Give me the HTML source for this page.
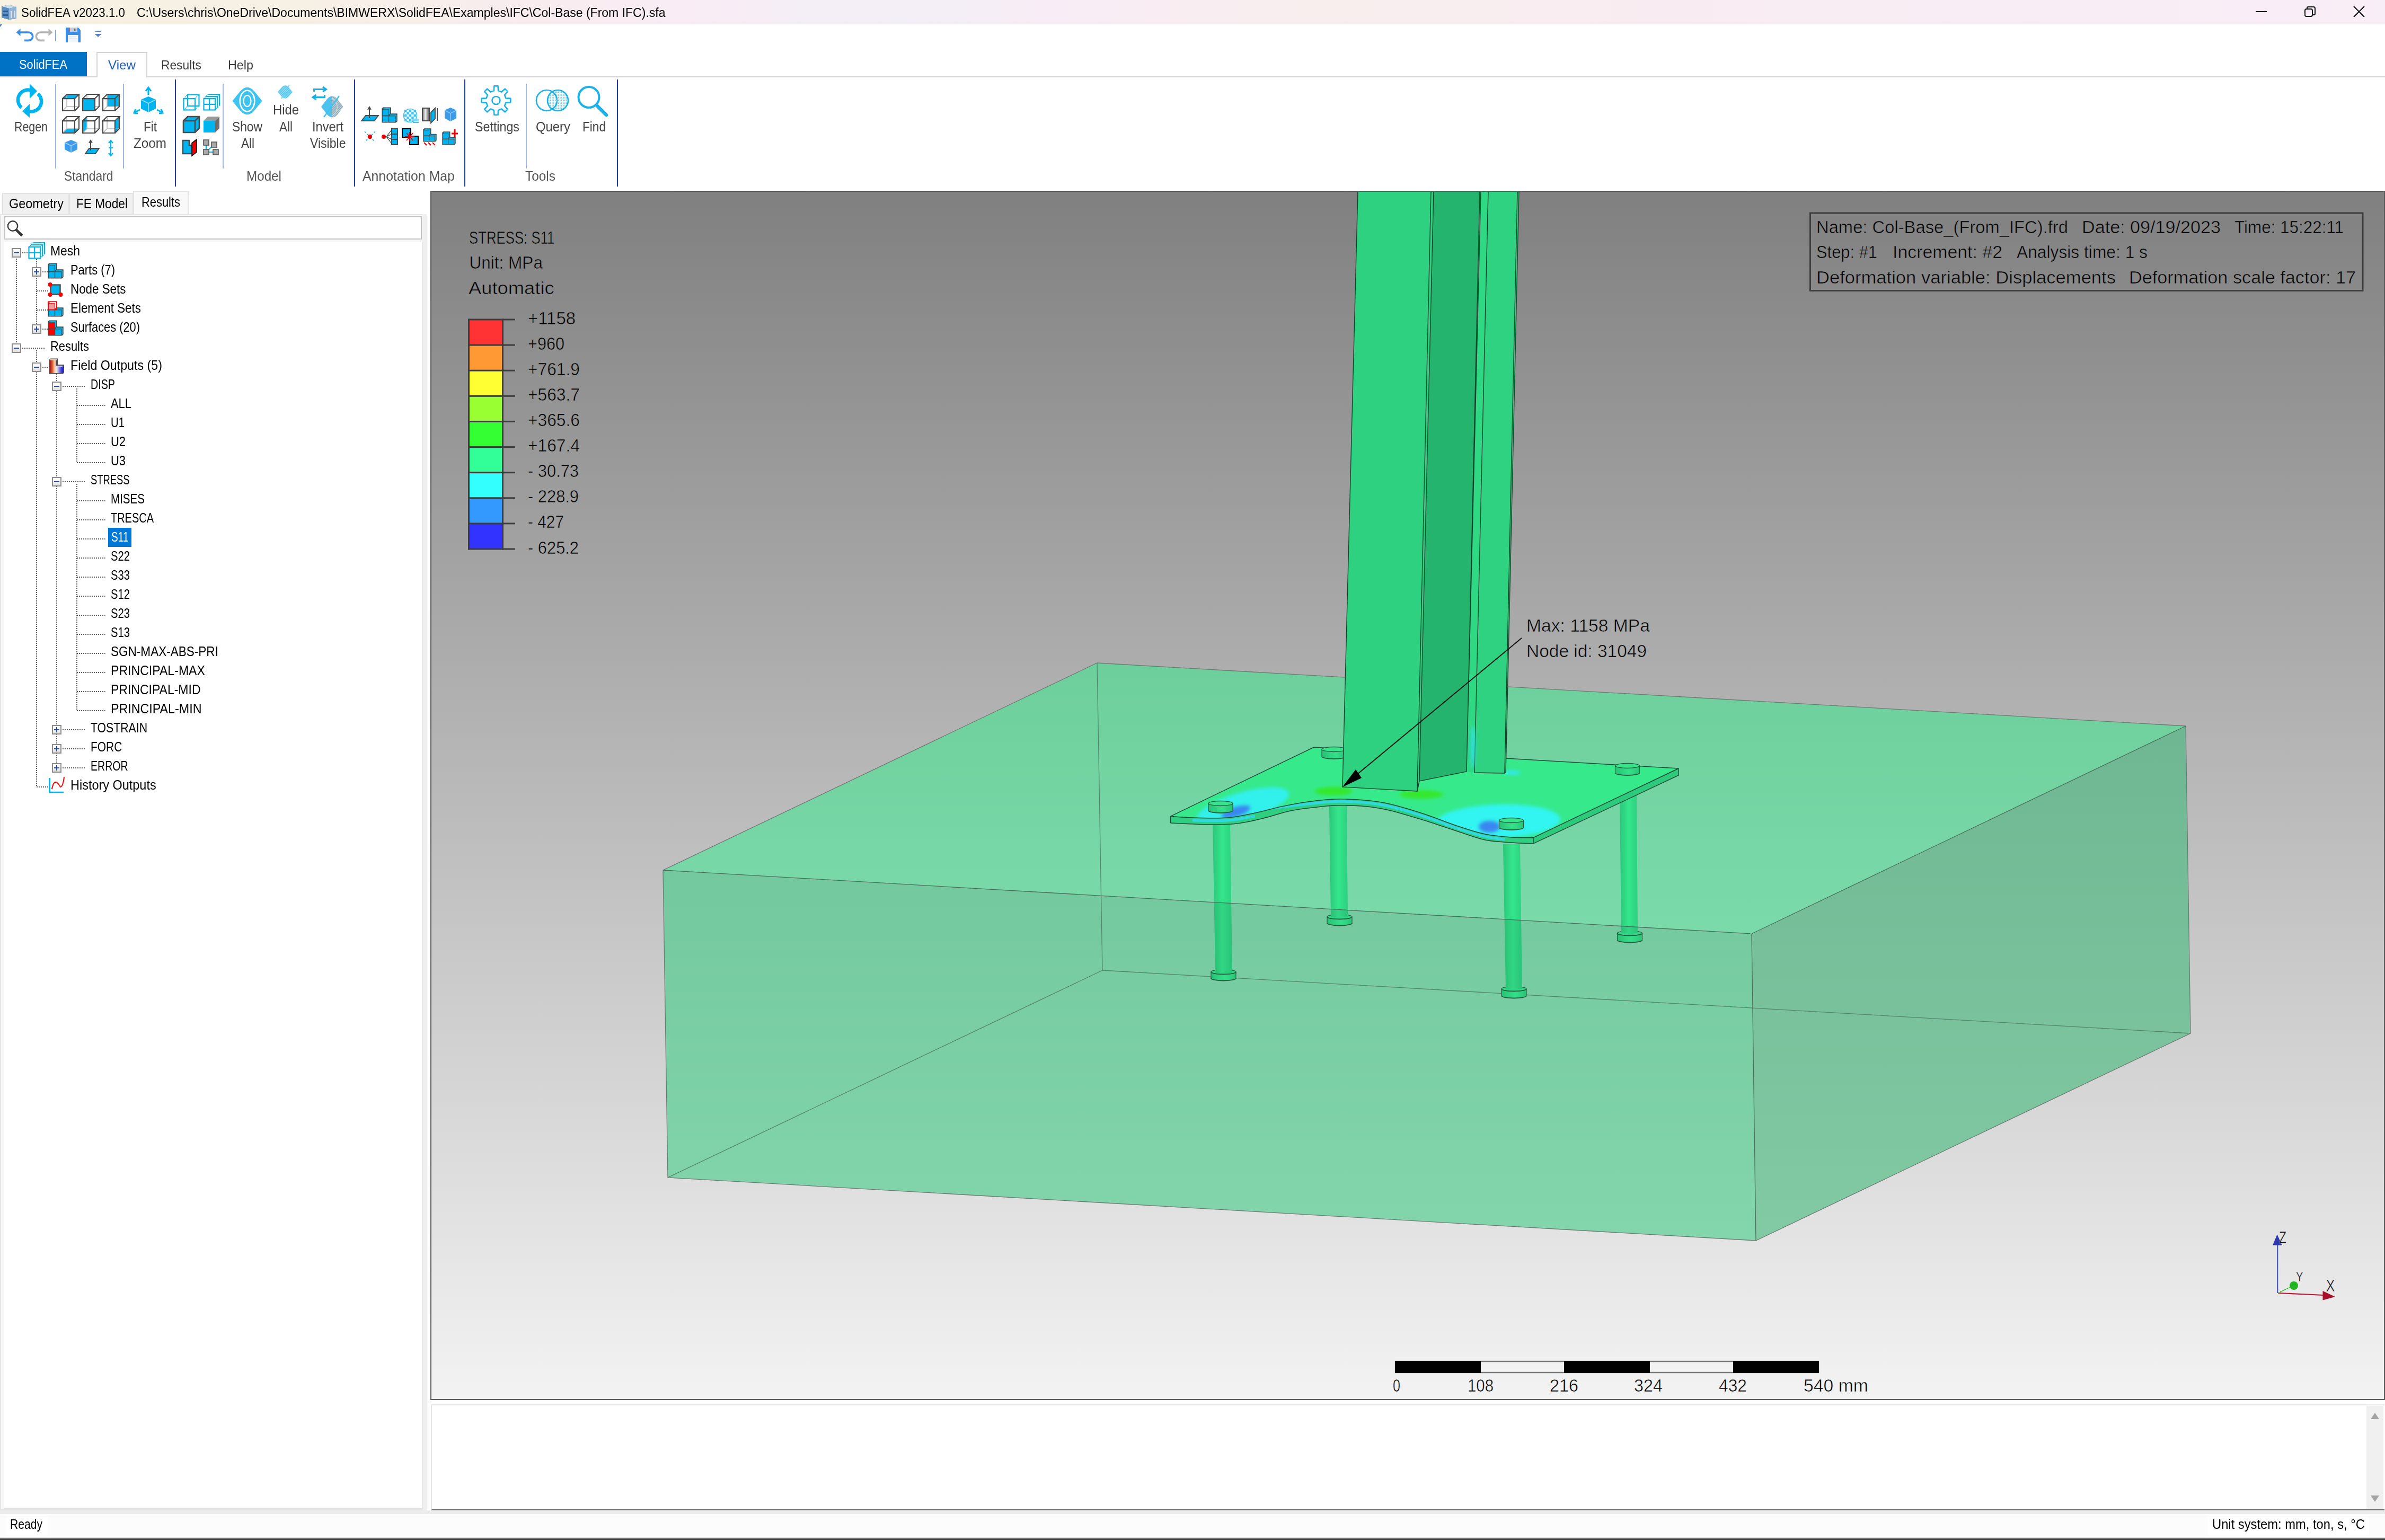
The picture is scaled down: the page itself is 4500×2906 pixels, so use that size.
<!DOCTYPE html><html><head><meta charset="utf-8"><title>SolidFEA</title><style>
html,body{margin:0;padding:0;width:4500px;height:2906px;overflow:hidden;background:#fff;}
body{position:relative;font-family:"Liberation Sans",sans-serif;}
.a{position:absolute;box-sizing:border-box;}
.t{position:absolute;white-space:nowrap;line-height:1;transform-origin:0 0;font-family:"Liberation Sans",sans-serif;}
svg{position:absolute;overflow:visible;}
svg text{font-family:"Liberation Sans",sans-serif;}
</style></head><body>
<div class="a" style="left:0;top:0;width:4500px;height:46px;background:linear-gradient(90deg,#f7f2e2 0px,#f7f0e6 600px,#f8ecef 1000px,#f9ecf5 1300px,#f5eef6 1500px,#f3eff7 1700px,#f8ecf5 2030px,#f8eeed 2500px,#f8ecf2 3100px,#f8eef7 4500px);"></div>
<svg style="left:0;top:0" width="46" height="46" viewBox="0 0 46 46">
<polygon points="17,9 31,13 31,35 17,37 3,33 3,12" fill="#3d6fa8"/>
<polygon points="3,12 17,9 31,13 17,16" fill="#c9dcec"/>
<polygon points="3,12 17,16 17,37 3,33" fill="#5b8cc0"/>
<polygon points="17,16 31,13 31,35 17,37" fill="#8fb3d6"/>
<rect x="5" y="20" width="10" height="3" fill="#2a5d96"/><rect x="5" y="27" width="10" height="3" fill="#2a5d96"/>
<rect x="20" y="21" width="3" height="13" fill="#d8e6f2"/><rect x="26" y="20" width="3" height="13" fill="#d8e6f2"/>
</svg>
<div class="t" style="left:40.0px;top:11.7px;font-size:24.64px;color:#000;font-weight:normal;transform:scaleX(0.9057);">SolidFEA v2023.1.0</div>
<div class="t" style="left:258.0px;top:11.7px;font-size:24.64px;color:#000;font-weight:normal;transform:scaleX(0.9346);">C:\Users\chris\OneDrive\Documents\BIMWERX\SolidFEA\Examples\IFC\Col-Base (From IFC).sfa</div>
<svg style="left:4200px;top:0" width="300" height="46" viewBox="4200 0 300 46">
<rect x="4256" y="21" width="21" height="2" fill="#111"/>
<rect x="4349" y="17" width="14" height="14" rx="3" fill="none" stroke="#111" stroke-width="2"/>
<path d="M4353,16 V15 a2,2 0 0 1 2,-2 h10 a3,3 0 0 1 3,3 v10 a2,2 0 0 1 -2,2 h-2" fill="none" stroke="#111" stroke-width="2"/>
<path d="M4441 12 L4461 32 M4461 12 L4441 32" stroke="#111" stroke-width="2"/>
</svg>
<svg style="left:0;top:46px" width="220" height="52" viewBox="0 46 220 52">
<path d="M0 46 h4 v2 h-2 v2 h-2z" fill="#5a7fc0"/>
<path d="M35 61 h19 a7.7 7.7 0 0 1 0 15.4 h-8" fill="none" stroke="#3a8ee6" stroke-width="3.6"/>
<path d="M30.5 61 l8 -7 v14z" fill="#3a8ee6"/>
<path d="M95 61 h-19 a7.7 7.7 0 0 0 0 15.4 h8" fill="none" stroke="#b4b4b4" stroke-width="3.6"/>
<path d="M99.5 61 l-8 -7 v14z" fill="#b4b4b4"/>
<rect x="104" y="56" width="2" height="22" fill="#8aa8d8"/>
<path d="M124 52 h23.5 l4.5 4.5 v23.5 h-28z" fill="#3a8ee6"/>
<rect x="131.5" y="52" width="14.5" height="8" fill="#c8ccd4"/><rect x="140" y="54" width="2.5" height="4" fill="#777"/><rect x="130" y="52" width="1.8" height="8" fill="#9a6a8a"/>
<rect x="128" y="66" width="19.5" height="14" fill="#f0f6fc"/><rect x="130" y="68" width="16" height="1.6" fill="#dfeefa"/><rect x="130" y="72" width="16" height="1.6" fill="#dfeefa"/>
<rect x="180" y="58" width="10" height="2" fill="#5a7fc0"/>
<rect x="180" y="64" width="10" height="2" fill="#5a7fc0"/>
<path d="M181 66 h8 l-4 4z" fill="#5a7fc0"/>
</svg><div class="a" style="left:0;top:98px;width:164px;height:46px;background:#0072c6;"></div>
<div class="t" style="left:36.0px;top:110.1px;font-size:24.64px;color:#ffffff;font-weight:normal;transform:scaleX(0.8861);">SolidFEA</div>
<div class="a" style="left:0;top:144px;width:4500px;height:2px;background:#d4d4d4;"></div>
<div class="a" style="left:182px;top:98px;width:96px;height:48px;border:2px solid #d4d4d4;border-bottom:none;background:#fff;"></div>
<div class="t" style="left:204.0px;top:110.6px;font-size:24.64px;color:#1d5cb4;font-weight:normal;transform:scaleX(0.9819);">View</div>
<div class="t" style="left:304.0px;top:110.6px;font-size:24.64px;color:#3a3a3a;font-weight:normal;transform:scaleX(0.9251);">Results</div>
<div class="t" style="left:430.0px;top:110.6px;font-size:24.64px;color:#3a3a3a;font-weight:normal;transform:scaleX(0.9473);">Help</div>
<svg style="left:0;top:146px" width="1200" height="214" viewBox="0 146 1200 214"><rect x="104" y="158" width="2" height="160" fill="#9db8e2"/><rect x="232" y="158" width="2" height="160" fill="#9db8e2"/><rect x="420" y="158" width="2" height="160" fill="#9db8e2"/><rect x="992" y="158" width="2" height="160" fill="#9db8e2"/><rect x="330" y="150" width="2" height="202" fill="#1b3c8c"/><rect x="668" y="150" width="2" height="202" fill="#1b3c8c"/><rect x="876" y="150" width="2" height="202" fill="#1b3c8c"/><rect x="1164" y="150" width="2" height="202" fill="#1b3c8c"/><path d="M40.5,203 A19,19 0 0 1 60,171" fill="none" stroke="#00b4ef" stroke-width="6.5"/><path d="M56,158 L70,172 L56,186 Z" fill="#00b4ef"/><path d="M71.5,177 A19,19 0 0 1 52,209" fill="none" stroke="#00b4ef" stroke-width="6.5"/><path d="M56,196 L42,210 L56,222 Z" fill="#00b4ef"/><polygon points="118,186.06 126.06,178 149,178 140.94,186.06" fill="#00b4ef"/><path d="M126.06,178 V200.94 H149 M126.06,200.94 L118,209" stroke="#b8b8b8" stroke-width="1.6" fill="none"/><path d="M118,186.06 H140.94 V209 H118 Z M118,186.06 L126.06,178 H149 L140.94,186.06 M149,178 V200.94 L140.94,209" stroke="#4a4a4a" stroke-width="2.2" fill="none" stroke-linejoin="miter"/><path d="M164.06,178 V200.94 H187 M164.06,200.94 L156,209" stroke="#b8b8b8" stroke-width="1.6" fill="none"/><polygon points="156,186.06 178.94,186.06 178.94,209 156,209" fill="#00b4ef"/><path d="M156,186.06 H178.94 V209 H156 Z M156,186.06 L164.06,178 H187 L178.94,186.06 M187,178 V200.94 L178.94,209" stroke="#4a4a4a" stroke-width="2.2" fill="none" stroke-linejoin="miter"/><polygon points="202.06,178 225,178 225,200.94 202.06,200.94" fill="#00b4ef"/><path d="M202.06,178 V200.94 H225 M202.06,200.94 L194,209" stroke="#b8b8b8" stroke-width="1.6" fill="none"/><path d="M194,186.06 H216.94 V209 H194 Z M194,186.06 L202.06,178 H225 L216.94,186.06 M225,178 V200.94 L216.94,209" stroke="#4a4a4a" stroke-width="2.2" fill="none" stroke-linejoin="miter"/><polygon points="118,251 126.06,242.94 149,242.94 140.94,251" fill="#00b4ef"/><path d="M126.06,220 V242.94 H149 M126.06,242.94 L118,251" stroke="#b8b8b8" stroke-width="1.6" fill="none"/><path d="M118,228.06 H140.94 V251 H118 Z M118,228.06 L126.06,220 H149 L140.94,228.06 M149,220 V242.94 L140.94,251" stroke="#4a4a4a" stroke-width="2.2" fill="none" stroke-linejoin="miter"/><polygon points="156,228.06 164.06,220 164.06,242.94 156,251" fill="#00b4ef"/><path d="M164.06,220 V242.94 H187 M164.06,242.94 L156,251" stroke="#b8b8b8" stroke-width="1.6" fill="none"/><path d="M156,228.06 H178.94 V251 H156 Z M156,228.06 L164.06,220 H187 L178.94,228.06 M187,220 V242.94 L178.94,251" stroke="#4a4a4a" stroke-width="2.2" fill="none" stroke-linejoin="miter"/><polygon points="216.94,228.06 225,220 225,242.94 216.94,251" fill="#00b4ef"/><path d="M202.06,220 V242.94 H225 M202.06,242.94 L194,251" stroke="#b8b8b8" stroke-width="1.6" fill="none"/><path d="M194,228.06 H216.94 V251 H194 Z M194,228.06 L202.06,220 H225 L216.94,228.06 M225,220 V242.94 L216.94,251" stroke="#4a4a4a" stroke-width="2.2" fill="none" stroke-linejoin="miter"/><polygon points="134,264 146,269 146,282 134,288 122,282 122,269" fill="#3d9ae8"/><path d="M122,269 L134,275 L146,269 M134,275 V288" stroke="#9fd0f6" stroke-width="1.6" fill="none"/><polygon points="161,290 168,280 187,280 180,290" fill="#00b4ef" stroke="#4a4a4a" stroke-width="1.8"/><path d="M171,264 V284 M168,270 L171,265 L174,270" stroke="#4a4a4a" stroke-width="2" fill="none"/><path d="M209,264 V294 M205,270 L209,265 L213,270 M205,289 L209,294 L213,289 M205,279 L213,279" stroke="#00b4ef" stroke-width="2.2" fill="none"/><polygon points="280,182 294,188 294,205 280,212 266,205 266,188" fill="#00b4ef"/><path d="M266,188 L280,195 L294,188 M280,195 V212" stroke="#9fdaf6" stroke-width="1.6" fill="none"/><path d="M280,179 V166 M275,172 L280,165 L285,172" stroke="#00b4ef" stroke-width="3" fill="none"/><path d="M264,207 L254,212 M256,206 L253,213 L260,214" stroke="#00b4ef" stroke-width="3" fill="none"/><path d="M296,207 L306,212 M304,206 L307,213 L300,214" stroke="#00b4ef" stroke-width="3" fill="none"/><rect x="354.0" y="178.5" width="21.5" height="21.5" fill="none" stroke="#00b4ef" stroke-width="2.2"/><rect x="346.5" y="186.0" width="21.5" height="21.5" fill="none" stroke="#00b4ef" stroke-width="2.2"/><path d="M346.5,186.0 L354.0,178.5 M368.0,186.0 L375.5,178.5 M346.5,207.5 L354.0,200.0 M368.0,207.5 L375.5,200.0" stroke="#00b4ef" stroke-width="1.4" stroke-dasharray="2,1.5"/><path d="M392.5,178.0 H414.0 V199.5" stroke="#00b4ef" stroke-width="2.2" fill="none"/><path d="M388.5,182.0 H410.0 V203.5" stroke="#00b4ef" stroke-width="2.2" fill="none"/><path d="M384.5,186.0 L392.5,178.0 M406.0,186.0 L414.0,178.0 M406.0,207.5 L414.0,199.5" stroke="#00b4ef" stroke-width="1.5" stroke-dasharray="2,1.4"/><rect x="384.5" y="186.0" width="21.5" height="21.5" fill="#fff" stroke="#00b4ef" stroke-width="2.2"/><path d="M395.2,186.0 V207.5 M384.5,196.8 H406.0" stroke="#00b4ef" stroke-width="2.2"/><polygon points="346,228 354,220 376,220 376,242 368,250 346,250" fill="#00b4ef" stroke="#4a4a4a" stroke-width="2.6"/><path d="M346,228 H368 V250 M368,228 L376,220" stroke="#4a4a4a" stroke-width="2.6" fill="none"/><polygon points="384,228 392,220 414,220 406,228" fill="#9a9a9a"/><polygon points="406,228 414,220 414,242 406,250" fill="#6e6e6e"/><rect x="384" y="228" width="22" height="22" fill="#00b4ef"/><path d="M345,265 H357 V274 H362 V290 H345 Z" fill="#00b4ef" stroke="#4a4a4a" stroke-width="2.4"/><polygon points="362,270 371,263 371,287 362,294" fill="#f00000" stroke="#111" stroke-width="1.6"/><path d="M389,270 V287 H406 M389,287 L402,274" stroke="#00b4ef" stroke-width="2.2" fill="none"/><rect x="384" y="264" width="10" height="10" fill="#a8a8a8" stroke="#555" stroke-width="1.6"/><rect x="399" y="268" width="10" height="10" fill="#a8a8a8" stroke="#555" stroke-width="1.6"/><rect x="384" y="282" width="10" height="10" fill="#a8a8a8" stroke="#555" stroke-width="1.6"/><rect x="402" y="282" width="10" height="10" fill="#a8a8a8" stroke="#555" stroke-width="1.6"/><path d="M438.5,190.5 L453,172.5 Q466.5,157 480,172.5 L494.5,190.5 L480,208.5 Q466.5,224 453,208.5 Z" fill="#3cc3ef"/><ellipse cx="466.5" cy="190.5" rx="13.8" ry="19.8" fill="none" stroke="#fff" stroke-width="2.6"/><ellipse cx="466.5" cy="190.5" rx="7" ry="10.5" fill="none" stroke="#fff" stroke-width="2.2"/><defs><pattern id="hatch" width="3" height="3" patternUnits="userSpaceOnUse" patternTransform="rotate(45)"><rect width="3" height="3" fill="#4cc6f0"/><rect width="1.2" height="3" fill="#a8e4f8"/></pattern><pattern id="hatchg" width="3" height="3" patternUnits="userSpaceOnUse" patternTransform="rotate(45)"><rect width="3" height="3" fill="#8ba6b2"/><rect width="1.2" height="3" fill="#c8d8de"/></pattern></defs><path d="M524,173.5 L531,165 Q538,157.5 545,165 L552,173.5 L545,182 Q538,189.5 531,182 Z" fill="url(#hatch)"/><path d="M531,186 L546,160" stroke="#6fd2f4" stroke-width="1.6"/><path d="M591,168.5 H613 M609,164 L615.5,168.5 L609,173 M592.5,168.5 V173" stroke="#16aee8" stroke-width="3" fill="none"/><path d="M614,183.5 H592 M596.5,179 L590,183.5 L596.5,188 M612.5,183.5 V179" stroke="#16aee8" stroke-width="3" fill="none"/><clipPath id="invL"><rect x="600" y="175" width="26" height="50"/></clipPath><clipPath id="invR"><rect x="626" y="175" width="26" height="50"/></clipPath><path d="M606,201.5 L617,187 Q627,176 637,187 L647.5,201.5 L637,216 Q627,227 617,216 Z" fill="#4cc3ef" clip-path="url(#invL)"/><path d="M606,201.5 L617,187 Q627,176 637,187 L647.5,201.5 L637,216 Q627,227 617,216 Z" fill="url(#hatchg)" clip-path="url(#invR)"/><path d="M626,185 Q638,192 636,206 Q633,216 626,218" fill="none" stroke="#c8d8de" stroke-width="1.6"/><path d="M611,221 L640,181" stroke="#3cc3ef" stroke-width="2.4"/><polygon points="682,228 690,218 714,218 706,228" fill="#00b4ef" stroke="#4a4a4a" stroke-width="1.8"/><path d="M697,202 V223 M694,207 L697,202 L700,207" stroke="#4a4a4a" stroke-width="2" fill="none"/><polygon points="720.4,204.6 722.9,202.4 737.9,202.4 737.9,214.3 749.7,214.3 749.7,228.9 747.1,231.4 720.4,231.4" fill="#4a4a4a"/><rect x="723.5" y="203.8" width="12.5" height="2.4" fill="#00b4ef"/><rect x="733.8" y="205.5" width="2.2" height="10.0" fill="#00b4ef"/><rect x="722.0" y="207.0" width="10.8" height="10.6" fill="#00b4ef"/><rect x="722.0" y="219.4" width="10.8" height="10.6" fill="#00b4ef"/><rect x="734.2" y="219.4" width="11.4" height="10.6" fill="#00b4ef"/><rect x="736.0" y="216.0" width="11.5" height="2.2" fill="#00b4ef"/><rect x="746.6" y="217.0" width="1.8" height="11.5" fill="#00b4ef"/><circle cx="774" cy="218" r="12.5" fill="#eafaff" stroke="#3cc3ef" stroke-width="1.6"/><rect x="763.0" y="207.0" width="4.4" height="4.4" fill="#3cc3ef"/><rect x="763.0" y="215.8" width="4.4" height="4.4" fill="#3cc3ef"/><rect x="763.0" y="224.6" width="4.4" height="4.4" fill="#3cc3ef"/><rect x="767.4" y="211.4" width="4.4" height="4.4" fill="#3cc3ef"/><rect x="767.4" y="220.2" width="4.4" height="4.4" fill="#3cc3ef"/><rect x="771.8" y="207.0" width="4.4" height="4.4" fill="#3cc3ef"/><rect x="771.8" y="215.8" width="4.4" height="4.4" fill="#3cc3ef"/><rect x="771.8" y="224.6" width="4.4" height="4.4" fill="#3cc3ef"/><rect x="776.2" y="211.4" width="4.4" height="4.4" fill="#3cc3ef"/><rect x="776.2" y="220.2" width="4.4" height="4.4" fill="#3cc3ef"/><rect x="780.6" y="207.0" width="4.4" height="4.4" fill="#3cc3ef"/><rect x="780.6" y="215.8" width="4.4" height="4.4" fill="#3cc3ef"/><rect x="780.6" y="224.6" width="4.4" height="4.4" fill="#3cc3ef"/><rect x="778" y="224" width="12" height="5" fill="#7fd6f6"/><rect x="779" y="230" width="11" height="2" fill="#3cc3ef"/><rect x="797" y="204" width="13" height="24" fill="url(#gradbar)" stroke="#4a4a4a" stroke-width="2"/><polygon points="813,212 821,204 821,224 813,232" fill="#00b4ef" stroke="#4a4a4a" stroke-width="1.8"/><rect x="824" y="204" width="2" height="24" fill="#4a4a4a"/><polygon points="850,203 861,208 861,223 850,229 839,223 839,208" fill="#3d9ae8"/><path d="M839,208 L850,214 L861,208 M850,214 V229" stroke="#8fc8f4" stroke-width="1.5" fill="none"/><path d="M688,248 L708,268 M708,248 L688,268" stroke="#12b0ee" stroke-width="1.6" stroke-dasharray="3.5,3.5"/><circle cx="698" cy="258" r="4.2" fill="#f00000"/><rect x="739" y="243" width="11" height="30" fill="#00b4ef" stroke="#4a4a4a" stroke-width="2"/><path d="M739,253 H750 M739,263 H750" stroke="#4a4a4a" stroke-width="2"/><path d="M729,258 L739,245 M729,258 L739,253 M729,258 L739,263 M729,258 L739,271" stroke="#333" stroke-width="1.2"/><rect x="726" y="256" width="4" height="3" fill="#777"/><circle cx="724" cy="258" r="4" fill="#f00000"/><rect x="759" y="243" width="16" height="16" fill="#00b4ef" stroke="#000" stroke-width="2"/><rect x="773" y="257" width="16" height="16" fill="#00b4ef" stroke="#000" stroke-width="2"/><path d="M773,249 V267 M764,258 H782 M767,251 L779,265 M779,251 L767,265" stroke="#f00000" stroke-width="1.8"/><polygon points="798.3,244.3 800.5,242.3 813.5,242.3 813.5,252.7 823.7,252.7 823.7,265.3 821.5,267.5 798.3,267.5" fill="#4a4a4a"/><rect x="801.0" y="243.6" width="10.8" height="2.1" fill="#00b4ef"/><rect x="810.0" y="245.0" width="1.9" height="8.7" fill="#00b4ef"/><rect x="799.7" y="246.3" width="9.4" height="9.2" fill="#00b4ef"/><rect x="799.7" y="257.1" width="9.4" height="9.2" fill="#00b4ef"/><rect x="810.3" y="257.1" width="9.9" height="9.2" fill="#00b4ef"/><rect x="811.9" y="254.1" width="10.0" height="1.9" fill="#00b4ef"/><rect x="821.1" y="255.0" width="1.6" height="10.0" fill="#00b4ef"/><path d="M800,269 L805,274 M808,269 L813,274 M816,269 L821,274" stroke="#f00000" stroke-width="2"/><polygon points="834.3,250.3 836.5,248.3 849.5,248.3 849.5,258.7 859.7,258.7 859.7,271.3 857.5,273.5 834.3,273.5" fill="#4a4a4a"/><rect x="837.0" y="249.6" width="10.8" height="2.1" fill="#00b4ef"/><rect x="846.0" y="251.0" width="1.9" height="8.7" fill="#00b4ef"/><rect x="835.7" y="252.3" width="9.4" height="9.2" fill="#00b4ef"/><rect x="835.7" y="263.1" width="9.4" height="9.2" fill="#00b4ef"/><rect x="846.3" y="263.1" width="9.9" height="9.2" fill="#00b4ef"/><rect x="847.9" y="260.1" width="10.0" height="1.9" fill="#00b4ef"/><rect x="857.1" y="261.0" width="1.6" height="10.0" fill="#00b4ef"/><path d="M858,244 V260 M852,252 H864" stroke="#f00000" stroke-width="3"/><polygon points="954.5,185.4 963.3,185.9 963.3,193.1 954.5,193.6 952.0,199.7 957.8,206.3 952.8,211.3 946.2,205.5 940.1,208.0 939.6,216.8 932.4,216.8 931.9,208.0 925.8,205.5 919.2,211.3 914.2,206.3 920.0,199.7 917.5,193.6 908.7,193.1 908.7,185.9 917.5,185.4 920.0,179.3 914.2,172.7 919.2,167.7 925.8,173.5 931.9,171.0 932.4,162.2 939.6,162.2 940.1,171.0 946.2,173.5 952.8,167.7 957.8,172.7 952.0,179.3" fill="none" stroke="#1ab2ea" stroke-width="2.6" stroke-linejoin="round"/><circle cx="936" cy="189.5" r="7.5" fill="none" stroke="#1ab2ea" stroke-width="2.6"/><defs><pattern id="dots" width="3" height="3" patternUnits="userSpaceOnUse"><rect width="3" height="3" fill="#fff"/><rect width="1.6" height="1.6" fill="#5ccbf0"/></pattern><linearGradient id="gradbar" x1="0" x2="1"><stop offset="0" stop-color="#777"/><stop offset="0.45" stop-color="#eee"/><stop offset="1" stop-color="#555"/></linearGradient></defs><circle cx="1052.5" cy="189.5" r="19.5" fill="url(#dots)" stroke="#1ab2ea" stroke-width="2.6"/><circle cx="1031.5" cy="189.5" r="19.5" fill="none" stroke="#1ab2ea" stroke-width="2.6"/><circle cx="1111" cy="183.5" r="19.5" fill="none" stroke="#1ab2ea" stroke-width="4"/><path d="M1126,199 L1144,217" stroke="#1ab2ea" stroke-width="6.5" stroke-linecap="round"/></svg>
<div class="t" style="left:27.0px;top:226.7px;font-size:25.07px;color:#444444;font-weight:normal;transform:scaleX(0.8527);">Regen</div>
<div class="t" style="left:271.0px;top:226.7px;font-size:25.07px;color:#444444;font-weight:normal;transform:scaleX(0.8976);">Fit</div>
<div class="t" style="left:252.0px;top:258.4px;font-size:25.07px;color:#444444;font-weight:normal;transform:scaleX(0.9674);">Zoom</div>
<div class="t" style="left:438.0px;top:226.7px;font-size:25.07px;color:#444444;font-weight:normal;transform:scaleX(0.9088);">Show</div>
<div class="t" style="left:455.0px;top:258.4px;font-size:25.07px;color:#444444;font-weight:normal;transform:scaleX(0.8972);">All</div>
<div class="t" style="left:515.0px;top:194.7px;font-size:25.07px;color:#444444;font-weight:normal;transform:scaleX(0.9502);">Hide</div>
<div class="t" style="left:527.0px;top:226.7px;font-size:25.07px;color:#444444;font-weight:normal;transform:scaleX(0.8972);">All</div>
<div class="t" style="left:589.0px;top:226.7px;font-size:25.07px;color:#444444;font-weight:normal;transform:scaleX(0.9409);">Invert</div>
<div class="t" style="left:584.5px;top:258.4px;font-size:25.07px;color:#444444;font-weight:normal;transform:scaleX(0.9195);">Visible</div>
<div class="t" style="left:896.0px;top:226.7px;font-size:25.07px;color:#444444;font-weight:normal;transform:scaleX(0.9272);">Settings</div>
<div class="t" style="left:1011.0px;top:226.7px;font-size:25.07px;color:#444444;font-weight:normal;transform:scaleX(0.9520);">Query</div>
<div class="t" style="left:1099.0px;top:226.7px;font-size:25.07px;color:#444444;font-weight:normal;transform:scaleX(0.9021);">Find</div>
<div class="t" style="left:120.5px;top:320.4px;font-size:25.07px;color:#555555;font-weight:normal;transform:scaleX(0.9090);">Standard</div>
<div class="t" style="left:465.0px;top:320.4px;font-size:25.07px;color:#555555;font-weight:normal;transform:scaleX(0.9665);">Model</div>
<div class="t" style="left:684.0px;top:320.4px;font-size:25.07px;color:#555555;font-weight:normal;transform:scaleX(0.9907);">Annotation Map</div>
<div class="t" style="left:991.0px;top:320.4px;font-size:25.07px;color:#555555;font-weight:normal;transform:scaleX(0.9738);">Tools</div><div class="a" style="left:4px;top:364px;width:127px;height:42px;background:#f0f0f0;border:2px solid #e3e3e3;border-bottom:none;"></div>
<div class="a" style="left:130px;top:364px;width:122px;height:42px;background:#f0f0f0;border:2px solid #e3e3e3;border-bottom:none;"></div>
<div class="a" style="left:251px;top:360px;width:105px;height:46px;background:#f9f9f9;border:2px solid #e3e3e3;border-bottom:none;"></div>
<div class="t" style="left:17.0px;top:371.7px;font-size:25.07px;color:#000;font-weight:normal;transform:scaleX(0.9358);">Geometry</div>
<div class="t" style="left:144.0px;top:371.7px;font-size:25.07px;color:#000;font-weight:normal;transform:scaleX(0.9041);">FE Model</div>
<div class="t" style="left:267.0px;top:368.7px;font-size:25.07px;color:#000;font-weight:normal;transform:scaleX(0.8732);">Results</div>
<div class="a" style="left:0;top:404px;width:805px;height:2446px;background:#f8f8f8;border:2px solid #e6e6e6;border-right:none;"></div>
<div class="a" style="left:797px;top:404px;width:8px;height:2446px;background:#efefef;"></div>
<div class="a" style="left:8px;top:408px;width:788px;height:44px;background:#fff;border:2px solid #c4c4c4;"></div>
<div class="a" style="left:8px;top:457px;width:790px;height:2391px;background:#fff;border-bottom:2px solid #e3e3e3;border-right:2px solid #e6e6e6;"></div>
<svg style="left:0;top:400px" width="60" height="60" viewBox="0 400 60 60"><circle cx="24" cy="426.5" r="9.2" fill="#fafafa" stroke="#3a3a3a" stroke-width="2.4"/><path d="M31,434 L40,443" stroke="#3a3a3a" stroke-width="5" stroke-linecap="square"/></svg>
<svg style="left:0;top:450px" width="800" height="1070" viewBox="0 450 800 1070"><defs><linearGradient id="tbg" x1="0" y1="0" x2="0" y2="1"><stop offset="0" stop-color="#ffffff"/><stop offset="0.5" stop-color="#f4f4f4"/><stop offset="1" stop-color="#dcdcdc"/></linearGradient><linearGradient id="fgrad" x1="0" x2="1"><stop offset="0" stop-color="#a01010"/><stop offset="0.2" stop-color="#e06030"/><stop offset="0.4" stop-color="#fcd0b0"/><stop offset="0.55" stop-color="#e8e8e8"/><stop offset="0.75" stop-color="#8080e8"/><stop offset="1" stop-color="#2020c0"/></linearGradient></defs><line x1="69" y1="489" x2="69" y2="621" stroke="#5a5a5a" stroke-width="2" stroke-dasharray="2,2"/><line x1="69" y1="661" x2="69" y2="1485" stroke="#5a5a5a" stroke-width="2" stroke-dasharray="2,2"/><line x1="107" y1="705" x2="107" y2="1449" stroke="#5a5a5a" stroke-width="2" stroke-dasharray="2,2"/><line x1="145" y1="733" x2="145" y2="873" stroke="#5a5a5a" stroke-width="2" stroke-dasharray="2,2"/><line x1="145" y1="913" x2="145" y2="1341" stroke="#5a5a5a" stroke-width="2" stroke-dasharray="2,2"/><line x1="31" y1="488" x2="31" y2="648" stroke="#5a5a5a" stroke-width="2" stroke-dasharray="2,2"/><rect x="23" y="469" width="16" height="16" fill="url(#tbg)" stroke="#8c8c8c" stroke-width="2"/><rect x="26" y="476" width="10" height="2" fill="#2a4a9a"/><line x1="42" y1="477" x2="52" y2="477" stroke="#5a5a5a" stroke-width="2" stroke-dasharray="2,2"/><path d="M62.5,458.0 H84.0 V479.5" stroke="#00b4ef" stroke-width="2.2" fill="none"/><path d="M58.5,462.0 H80.0 V483.5" stroke="#00b4ef" stroke-width="2.2" fill="none"/><path d="M54.5,466.0 L62.5,458.0 M76.0,466.0 L84.0,458.0 M76.0,487.5 L84.0,479.5" stroke="#00b4ef" stroke-width="1.5" stroke-dasharray="2,1.4"/><rect x="54.5" y="466.0" width="21.5" height="21.5" fill="#fff" stroke="#00b4ef" stroke-width="2.2"/><path d="M65.2,466.0 V487.5 M54.5,476.8 H76.0" stroke="#00b4ef" stroke-width="2.2"/><rect x="61" y="505" width="16" height="16" fill="url(#tbg)" stroke="#8c8c8c" stroke-width="2"/><rect x="64" y="512" width="10" height="2" fill="#2a4a9a"/><rect x="68" y="508" width="2" height="10" fill="#2a4a9a"/><line x1="80" y1="513" x2="92" y2="513" stroke="#5a5a5a" stroke-width="2" stroke-dasharray="2,2"/><polygon points="90.4,498.6 92.9,496.4 107.9,496.4 107.9,508.3 119.7,508.3 119.7,522.9 117.1,525.4 90.4,525.4" fill="#4a4a4a"/><rect x="93.5" y="497.8" width="12.5" height="2.4" fill="#00b4ef"/><rect x="103.8" y="499.5" width="2.2" height="10.0" fill="#00b4ef"/><rect x="92.0" y="501.0" width="10.8" height="10.6" fill="#00b4ef"/><rect x="92.0" y="513.4" width="10.8" height="10.6" fill="#00b4ef"/><rect x="104.2" y="513.4" width="11.4" height="10.6" fill="#00b4ef"/><rect x="106.0" y="510.0" width="11.5" height="2.2" fill="#00b4ef"/><rect x="116.6" y="511.0" width="1.8" height="11.5" fill="#00b4ef"/><line x1="69" y1="549" x2="92" y2="549" stroke="#5a5a5a" stroke-width="2" stroke-dasharray="2,2"/><rect x="95.5" y="537.5" width="18" height="18" fill="#00b4ef" stroke="#4a4a4a" stroke-width="2.4"/><circle cx="94.5" cy="537" r="4" fill="#ff0000"/><circle cx="94.5" cy="556" r="4" fill="#ff0000"/><circle cx="114.5" cy="556" r="4" fill="#ff0000"/><line x1="69" y1="585" x2="92" y2="585" stroke="#5a5a5a" stroke-width="2" stroke-dasharray="2,2"/><polygon points="90.4,570.6 92.9,568.4 107.9,568.4 107.9,580.3 119.7,580.3 119.7,594.9 117.1,597.4 90.4,597.4" fill="#4a4a4a"/><rect x="93.5" y="569.8" width="12.5" height="2.4" fill="#00b4ef"/><rect x="103.8" y="571.5" width="2.2" height="10.0" fill="#00b4ef"/><rect x="92.0" y="573.0" width="10.8" height="10.6" fill="#00b4ef"/><rect x="92.0" y="585.4" width="10.8" height="10.6" fill="#00b4ef"/><rect x="104.2" y="585.4" width="11.4" height="10.6" fill="#00b4ef"/><rect x="106.0" y="582.0" width="11.5" height="2.2" fill="#00b4ef"/><rect x="116.6" y="583.0" width="1.8" height="11.5" fill="#00b4ef"/><rect x="90.4" y="568.4" width="17.5" height="16.4" fill="#ff0000"/><rect x="92.0" y="573.0" width="10.8" height="10.6" fill="#f49a9a"/><rect x="93.5" y="569.8" width="12.5" height="2.4" fill="#ffe0e0"/><rect x="103.8" y="571.5" width="2.2" height="10.0" fill="#ffe0e0"/><rect x="61" y="613" width="16" height="16" fill="url(#tbg)" stroke="#8c8c8c" stroke-width="2"/><rect x="64" y="620" width="10" height="2" fill="#2a4a9a"/><rect x="68" y="616" width="2" height="10" fill="#2a4a9a"/><line x1="80" y1="621" x2="92" y2="621" stroke="#5a5a5a" stroke-width="2" stroke-dasharray="2,2"/><polygon points="90.4,606.6 92.9,604.4 107.9,604.4 107.9,616.3 119.7,616.3 119.7,630.9 117.1,633.4 90.4,633.4" fill="#4a4a4a"/><rect x="93.5" y="605.8" width="12.5" height="2.4" fill="#00b4ef"/><rect x="103.8" y="607.5" width="2.2" height="10.0" fill="#00b4ef"/><rect x="92.0" y="609.0" width="10.8" height="10.6" fill="#ff0000"/><rect x="92.0" y="621.4" width="10.8" height="10.6" fill="#ff0000"/><rect x="104.2" y="621.4" width="11.4" height="10.6" fill="#00b4ef"/><rect x="106.0" y="618.0" width="11.5" height="2.2" fill="#00b4ef"/><rect x="116.6" y="619.0" width="1.8" height="11.5" fill="#00b4ef"/><rect x="23" y="649" width="16" height="16" fill="url(#tbg)" stroke="#8c8c8c" stroke-width="2"/><rect x="26" y="656" width="10" height="2" fill="#2a4a9a"/><line x1="42" y1="657" x2="85" y2="657" stroke="#5a5a5a" stroke-width="2" stroke-dasharray="2,2"/><rect x="61" y="685" width="16" height="16" fill="url(#tbg)" stroke="#8c8c8c" stroke-width="2"/><rect x="64" y="692" width="10" height="2" fill="#2a4a9a"/><line x1="80" y1="693" x2="92" y2="693" stroke="#5a5a5a" stroke-width="2" stroke-dasharray="2,2"/><path d="M92.5,679 L95,676.5 H109 V688 H121 V703 L119,705.5 H92.5 Z" fill="#4a4a4a"/><path d="M94,680 H105 V692 H118 V704 H94 Z" fill="url(#fgrad)"/><rect x="95" y="678" width="13" height="2" fill="#f0d0c0"/><rect x="106" y="690" width="13" height="2" fill="#c8c8f0"/><rect x="118" y="691" width="2" height="12" fill="#2a2ad0"/><rect x="99" y="721" width="16" height="16" fill="url(#tbg)" stroke="#8c8c8c" stroke-width="2"/><rect x="102" y="728" width="10" height="2" fill="#2a4a9a"/><line x1="118" y1="729" x2="161" y2="729" stroke="#5a5a5a" stroke-width="2" stroke-dasharray="2,2"/><line x1="145" y1="765" x2="198.5" y2="765" stroke="#5a5a5a" stroke-width="2" stroke-dasharray="2,2"/><line x1="145" y1="801" x2="198.5" y2="801" stroke="#5a5a5a" stroke-width="2" stroke-dasharray="2,2"/><line x1="145" y1="837" x2="198.5" y2="837" stroke="#5a5a5a" stroke-width="2" stroke-dasharray="2,2"/><line x1="145" y1="873" x2="198.5" y2="873" stroke="#5a5a5a" stroke-width="2" stroke-dasharray="2,2"/><rect x="99" y="901" width="16" height="16" fill="url(#tbg)" stroke="#8c8c8c" stroke-width="2"/><rect x="102" y="908" width="10" height="2" fill="#2a4a9a"/><line x1="118" y1="909" x2="161" y2="909" stroke="#5a5a5a" stroke-width="2" stroke-dasharray="2,2"/><line x1="145" y1="945" x2="198.5" y2="945" stroke="#5a5a5a" stroke-width="2" stroke-dasharray="2,2"/><line x1="145" y1="981" x2="198.5" y2="981" stroke="#5a5a5a" stroke-width="2" stroke-dasharray="2,2"/><line x1="145" y1="1017" x2="198.5" y2="1017" stroke="#5a5a5a" stroke-width="2" stroke-dasharray="2,2"/><line x1="145" y1="1053" x2="198.5" y2="1053" stroke="#5a5a5a" stroke-width="2" stroke-dasharray="2,2"/><line x1="145" y1="1089" x2="198.5" y2="1089" stroke="#5a5a5a" stroke-width="2" stroke-dasharray="2,2"/><line x1="145" y1="1125" x2="198.5" y2="1125" stroke="#5a5a5a" stroke-width="2" stroke-dasharray="2,2"/><line x1="145" y1="1161" x2="198.5" y2="1161" stroke="#5a5a5a" stroke-width="2" stroke-dasharray="2,2"/><line x1="145" y1="1197" x2="198.5" y2="1197" stroke="#5a5a5a" stroke-width="2" stroke-dasharray="2,2"/><line x1="145" y1="1233" x2="198.5" y2="1233" stroke="#5a5a5a" stroke-width="2" stroke-dasharray="2,2"/><line x1="145" y1="1269" x2="198.5" y2="1269" stroke="#5a5a5a" stroke-width="2" stroke-dasharray="2,2"/><line x1="145" y1="1305" x2="198.5" y2="1305" stroke="#5a5a5a" stroke-width="2" stroke-dasharray="2,2"/><line x1="145" y1="1341" x2="198.5" y2="1341" stroke="#5a5a5a" stroke-width="2" stroke-dasharray="2,2"/><rect x="99" y="1369" width="16" height="16" fill="url(#tbg)" stroke="#8c8c8c" stroke-width="2"/><rect x="102" y="1376" width="10" height="2" fill="#2a4a9a"/><rect x="106" y="1372" width="2" height="10" fill="#2a4a9a"/><line x1="118" y1="1377" x2="161" y2="1377" stroke="#5a5a5a" stroke-width="2" stroke-dasharray="2,2"/><rect x="99" y="1405" width="16" height="16" fill="url(#tbg)" stroke="#8c8c8c" stroke-width="2"/><rect x="102" y="1412" width="10" height="2" fill="#2a4a9a"/><rect x="106" y="1408" width="2" height="10" fill="#2a4a9a"/><line x1="118" y1="1413" x2="161" y2="1413" stroke="#5a5a5a" stroke-width="2" stroke-dasharray="2,2"/><rect x="99" y="1441" width="16" height="16" fill="url(#tbg)" stroke="#8c8c8c" stroke-width="2"/><rect x="102" y="1448" width="10" height="2" fill="#2a4a9a"/><rect x="106" y="1444" width="2" height="10" fill="#2a4a9a"/><line x1="118" y1="1449" x2="161" y2="1449" stroke="#5a5a5a" stroke-width="2" stroke-dasharray="2,2"/><line x1="69" y1="1485" x2="92" y2="1485" stroke="#5a5a5a" stroke-width="2" stroke-dasharray="2,2"/><path d="M93.5,1468 V1495 H120" stroke="#00b4ef" stroke-width="2.6" fill="none"/><path d="M98,1489 Q101,1474 106,1476 Q110,1478 114,1485 Q119,1484 121,1466" stroke="#ee1111" stroke-width="2.2" fill="none"/></svg>
<div class="a" style="left:204px;top:996px;width:44px;height:36px;background:#0078d7;"></div>
<div class="t" style="left:95.0px;top:460.7px;font-size:25.07px;color:#000000;font-weight:normal;transform:scaleX(0.9134);">Mesh</div>
<div class="t" style="left:133.0px;top:496.7px;font-size:25.07px;color:#000000;font-weight:normal;transform:scaleX(0.8738);">Parts (7)</div>
<div class="t" style="left:133.0px;top:532.7px;font-size:25.07px;color:#000000;font-weight:normal;transform:scaleX(0.8926);">Node Sets</div>
<div class="t" style="left:133.0px;top:568.7px;font-size:25.07px;color:#000000;font-weight:normal;transform:scaleX(0.8919);">Element Sets</div>
<div class="t" style="left:133.0px;top:604.7px;font-size:25.07px;color:#000000;font-weight:normal;transform:scaleX(0.8704);">Surfaces (20)</div>
<div class="t" style="left:95.0px;top:640.7px;font-size:25.07px;color:#000000;font-weight:normal;transform:scaleX(0.8732);">Results</div>
<div class="t" style="left:133.0px;top:676.7px;font-size:25.07px;color:#000000;font-weight:normal;transform:scaleX(0.9265);">Field Outputs (5)</div>
<div class="t" style="left:171.0px;top:712.7px;font-size:25.07px;color:#000000;font-weight:normal;transform:scaleX(0.7861);">DISP</div>
<div class="t" style="left:208.5px;top:748.7px;font-size:25.07px;color:#000000;font-weight:normal;transform:scaleX(0.8742);">ALL</div>
<div class="t" style="left:208.5px;top:784.7px;font-size:25.07px;color:#000000;font-weight:normal;transform:scaleX(0.8112);">U1</div>
<div class="t" style="left:208.5px;top:820.7px;font-size:25.07px;color:#000000;font-weight:normal;transform:scaleX(0.8736);">U2</div>
<div class="t" style="left:208.5px;top:856.7px;font-size:25.07px;color:#000000;font-weight:normal;transform:scaleX(0.8736);">U3</div>
<div class="t" style="left:171.0px;top:892.7px;font-size:25.07px;color:#000000;font-weight:normal;transform:scaleX(0.7337);">STRESS</div>
<div class="t" style="left:208.5px;top:928.7px;font-size:25.07px;color:#000000;font-weight:normal;transform:scaleX(0.8203);">MISES</div>
<div class="t" style="left:208.5px;top:964.7px;font-size:25.07px;color:#000000;font-weight:normal;transform:scaleX(0.7965);">TRESCA</div>
<div class="t" style="left:209.5px;top:1000.7px;font-size:25.07px;color:#ffffff;font-weight:normal;transform:scaleX(0.7602);">S11</div>
<div class="t" style="left:208.5px;top:1036.7px;font-size:25.07px;color:#000000;font-weight:normal;transform:scaleX(0.8070);">S22</div>
<div class="t" style="left:208.5px;top:1072.7px;font-size:25.07px;color:#000000;font-weight:normal;transform:scaleX(0.8070);">S33</div>
<div class="t" style="left:208.5px;top:1108.7px;font-size:25.07px;color:#000000;font-weight:normal;transform:scaleX(0.8070);">S12</div>
<div class="t" style="left:208.5px;top:1144.7px;font-size:25.07px;color:#000000;font-weight:normal;transform:scaleX(0.8070);">S23</div>
<div class="t" style="left:208.5px;top:1180.7px;font-size:25.07px;color:#000000;font-weight:normal;transform:scaleX(0.8070);">S13</div>
<div class="t" style="left:208.5px;top:1216.7px;font-size:25.07px;color:#000000;font-weight:normal;transform:scaleX(0.8995);">SGN-MAX-ABS-PRI</div>
<div class="t" style="left:208.5px;top:1252.7px;font-size:25.07px;color:#000000;font-weight:normal;transform:scaleX(0.9214);">PRINCIPAL-MAX</div>
<div class="t" style="left:208.5px;top:1288.7px;font-size:25.07px;color:#000000;font-weight:normal;transform:scaleX(0.9177);">PRINCIPAL-MID</div>
<div class="t" style="left:208.5px;top:1324.7px;font-size:25.07px;color:#000000;font-weight:normal;transform:scaleX(0.9280);">PRINCIPAL-MIN</div>
<div class="t" style="left:171.0px;top:1360.7px;font-size:25.07px;color:#000000;font-weight:normal;transform:scaleX(0.8472);">TOSTRAIN</div>
<div class="t" style="left:171.0px;top:1396.7px;font-size:25.07px;color:#000000;font-weight:normal;transform:scaleX(0.8363);">FORC</div>
<div class="t" style="left:171.0px;top:1432.7px;font-size:25.07px;color:#000000;font-weight:normal;transform:scaleX(0.7797);">ERROR</div>
<div class="t" style="left:133.0px;top:1468.7px;font-size:25.07px;color:#000000;font-weight:normal;transform:scaleX(0.9359);">History Outputs</div><svg style="left:0;top:0" width="4500" height="2906" viewBox="0 0 4500 2906"><defs>
<linearGradient id="bg" x1="0" y1="362" x2="0" y2="2640" gradientUnits="userSpaceOnUse"><stop offset="0" stop-color="#808080"/><stop offset="1" stop-color="#f3f3f3"/></linearGradient>
<clipPath id="vpc"><rect x="814" y="362" width="3683" height="2278"/></clipPath>
</defs><rect x="813" y="361" width="3686" height="2280" fill="url(#bg)" stroke="#5a5a5a" stroke-width="2"/><g clip-path="url(#vpc)"><defs>
<linearGradient id="topf" x1="0" y1="1251" x2="0" y2="1762" gradientUnits="userSpaceOnUse"><stop offset="0" stop-color="#6dcf9c"/><stop offset="1" stop-color="#7bdaaa"/></linearGradient>
<linearGradient id="frontf" x1="0" y1="1642" x2="0" y2="2341" gradientUnits="userSpaceOnUse"><stop offset="0" stop-color="#74c89e"/><stop offset="1" stop-color="#83d6ab"/></linearGradient>
<linearGradient id="rightf" x1="0" y1="1370" x2="0" y2="2341" gradientUnits="userSpaceOnUse"><stop offset="0" stop-color="#6eb792"/><stop offset="1" stop-color="#82caa4"/></linearGradient>
<linearGradient id="rodg" x1="0" x2="1"><stop offset="0" stop-color="#2ac77a"/><stop offset="0.5" stop-color="#35e68c"/><stop offset="1" stop-color="#2cd07f"/></linearGradient>
<linearGradient id="rodg2" x1="0" x2="1"><stop offset="0" stop-color="#28bc73"/><stop offset="0.5" stop-color="#31d683"/><stop offset="1" stop-color="#29c379"/></linearGradient>
<linearGradient id="nutg" x1="0" x2="1"><stop offset="0" stop-color="#27c275"/><stop offset="0.55" stop-color="#34e08a"/><stop offset="1" stop-color="#28c677"/></linearGradient>
<filter id="blur6" x="-50%" y="-50%" width="200%" height="200%"><feGaussianBlur stdDeviation="6"/></filter>
<filter id="blur3" x="-50%" y="-50%" width="200%" height="200%"><feGaussianBlur stdDeviation="3"/></filter>
<clipPath id="clipTop"><polygon points="1251,1642 2070,1251 4124,1370 3305,1762"/></clipPath>
<clipPath id="clipFront"><polygon points="1251,1642 3305,1762 3313,2341 1260,2222"/></clipPath>
</defs>
<polygon points="1251,1642 2070,1251 4124,1370 3305,1762" fill="url(#topf)"/>
<polygon points="1251,1642 3305,1762 3313,2341 1260,2222" fill="url(#frontf)"/>
<polygon points="3305,1762 4124,1370 4133,1950 3313,2341" fill="url(#rightf)"/>
<line x1="2070" y1="1251" x2="2080" y2="1831" stroke="#4f7d66" stroke-width="1.3" stroke-opacity="0.9"/>
<line x1="2080" y1="1831" x2="4133" y2="1950" stroke="#4f7d66" stroke-width="1.3" stroke-opacity="0.9"/>
<line x1="2080" y1="1831" x2="1260" y2="2222" stroke="#4f7d66" stroke-width="1.3" stroke-opacity="0.9"/>
<g clip-path="url(#clipTop)">
<path d="M2285.0,1834 V1846 A23.5,4.5 0 0 0 2332.0,1846 V1834 Z" fill="url(#nutg)"/><path d="M2285.0,1846 A23.5,4.5 0 0 0 2332.0,1846" fill="none" stroke="#2a5a40" stroke-width="1.8"/><ellipse cx="2308.5" cy="1834" rx="23.5" ry="4.5" fill="#2fd683" stroke="#2a5a40" stroke-width="1.4"/><path d="M2285.0,1834 V1846 M2332.0,1834 V1846" stroke="#2a5a40" stroke-width="1.2"/>
<polygon points="2288,1553 2321,1553 2325,1836 2293,1836" fill="url(#rodg)"/>
<path d="M2285.0,1834 A23.5,4.5 0 0 0 2332.0,1834" fill="none" stroke="#2a5a40" stroke-width="1.6"/>
<path d="M2504.0,1730 V1742 A23.5,4.5 0 0 0 2551.0,1742 V1730 Z" fill="url(#nutg)"/><path d="M2504.0,1742 A23.5,4.5 0 0 0 2551.0,1742" fill="none" stroke="#2a5a40" stroke-width="1.8"/><ellipse cx="2527.5" cy="1730" rx="23.5" ry="4.5" fill="#2fd683" stroke="#2a5a40" stroke-width="1.4"/><path d="M2504.0,1730 V1742 M2551.0,1730 V1742" stroke="#2a5a40" stroke-width="1.2"/>
<polygon points="2508,1521 2541,1521 2543,1730 2511,1730" fill="url(#rodg)"/>
<path d="M2504.0,1730 A23.5,4.5 0 0 0 2551.0,1730" fill="none" stroke="#2a5a40" stroke-width="1.6"/>
<path d="M2833.0,1866 V1879 A23.5,4.5 0 0 0 2880.0,1879 V1866 Z" fill="url(#nutg)"/><path d="M2833.0,1879 A23.5,4.5 0 0 0 2880.0,1879" fill="none" stroke="#2a5a40" stroke-width="1.8"/><ellipse cx="2856.5" cy="1866" rx="23.5" ry="4.5" fill="#2fd683" stroke="#2a5a40" stroke-width="1.4"/><path d="M2833.0,1866 V1879 M2880.0,1866 V1879" stroke="#2a5a40" stroke-width="1.2"/>
<polygon points="2836,1593 2868,1593 2872,1866 2841,1866" fill="url(#rodg)"/>
<path d="M2833.0,1866 A23.5,4.5 0 0 0 2880.0,1866" fill="none" stroke="#2a5a40" stroke-width="1.6"/>
<path d="M3051.5,1761 V1774 A23.5,4.5 0 0 0 3098.5,1774 V1761 Z" fill="url(#nutg)"/><path d="M3051.5,1774 A23.5,4.5 0 0 0 3098.5,1774" fill="none" stroke="#2a5a40" stroke-width="1.8"/><ellipse cx="3075" cy="1761" rx="23.5" ry="4.5" fill="#2fd683" stroke="#2a5a40" stroke-width="1.4"/><path d="M3051.5,1761 V1774 M3098.5,1761 V1774" stroke="#2a5a40" stroke-width="1.2"/>
<polygon points="3056,1500 3088,1500 3090,1761 3059,1761" fill="url(#rodg)"/>
<path d="M3051.5,1761 A23.5,4.5 0 0 0 3098.5,1761" fill="none" stroke="#2a5a40" stroke-width="1.6"/>
</g>
<g clip-path="url(#clipFront)">
<path d="M2285.0,1834 V1846 A23.5,4.5 0 0 0 2332.0,1846 V1834 Z" fill="url(#nutg)"/><path d="M2285.0,1846 A23.5,4.5 0 0 0 2332.0,1846" fill="none" stroke="#2a5a40" stroke-width="1.8"/><ellipse cx="2308.5" cy="1834" rx="23.5" ry="4.5" fill="#2fd683" stroke="#2a5a40" stroke-width="1.4"/><path d="M2285.0,1834 V1846 M2332.0,1834 V1846" stroke="#2a5a40" stroke-width="1.2"/>
<polygon points="2288,1553 2321,1553 2325,1836 2293,1836" fill="url(#rodg2)"/>
<path d="M2285.0,1834 A23.5,4.5 0 0 0 2332.0,1834" fill="none" stroke="#2a5a40" stroke-width="1.6"/>
<path d="M2504.0,1730 V1742 A23.5,4.5 0 0 0 2551.0,1742 V1730 Z" fill="url(#nutg)"/><path d="M2504.0,1742 A23.5,4.5 0 0 0 2551.0,1742" fill="none" stroke="#2a5a40" stroke-width="1.8"/><ellipse cx="2527.5" cy="1730" rx="23.5" ry="4.5" fill="#2fd683" stroke="#2a5a40" stroke-width="1.4"/><path d="M2504.0,1730 V1742 M2551.0,1730 V1742" stroke="#2a5a40" stroke-width="1.2"/>
<polygon points="2508,1521 2541,1521 2543,1730 2511,1730" fill="url(#rodg2)"/>
<path d="M2504.0,1730 A23.5,4.5 0 0 0 2551.0,1730" fill="none" stroke="#2a5a40" stroke-width="1.6"/>
<path d="M2833.0,1866 V1879 A23.5,4.5 0 0 0 2880.0,1879 V1866 Z" fill="url(#nutg)"/><path d="M2833.0,1879 A23.5,4.5 0 0 0 2880.0,1879" fill="none" stroke="#2a5a40" stroke-width="1.8"/><ellipse cx="2856.5" cy="1866" rx="23.5" ry="4.5" fill="#2fd683" stroke="#2a5a40" stroke-width="1.4"/><path d="M2833.0,1866 V1879 M2880.0,1866 V1879" stroke="#2a5a40" stroke-width="1.2"/>
<polygon points="2836,1593 2868,1593 2872,1866 2841,1866" fill="url(#rodg2)"/>
<path d="M2833.0,1866 A23.5,4.5 0 0 0 2880.0,1866" fill="none" stroke="#2a5a40" stroke-width="1.6"/>
<path d="M3051.5,1761 V1774 A23.5,4.5 0 0 0 3098.5,1774 V1761 Z" fill="url(#nutg)"/><path d="M3051.5,1774 A23.5,4.5 0 0 0 3098.5,1774" fill="none" stroke="#2a5a40" stroke-width="1.8"/><ellipse cx="3075" cy="1761" rx="23.5" ry="4.5" fill="#2fd683" stroke="#2a5a40" stroke-width="1.4"/><path d="M3051.5,1761 V1774 M3098.5,1761 V1774" stroke="#2a5a40" stroke-width="1.2"/>
<polygon points="3056,1500 3088,1500 3090,1761 3059,1761" fill="url(#rodg2)"/>
<path d="M3051.5,1761 A23.5,4.5 0 0 0 3098.5,1761" fill="none" stroke="#2a5a40" stroke-width="1.6"/>
</g>
<path d="M2208.5,1540.4 C2215.4,1540.8 2231.9,1542.6 2250,1543 C2268.1,1543.4 2297.3,1544.5 2317,1543 C2336.7,1541.5 2351.2,1537.5 2368,1534 C2384.8,1530.5 2401.3,1525.5 2418,1522 C2434.7,1518.5 2451.2,1515.3 2468,1513 C2484.8,1510.7 2502.2,1508.6 2519,1508 C2535.8,1507.4 2552.7,1508.2 2569,1509.5 C2585.3,1510.8 2597.8,1511.8 2617,1516 C2636.2,1520.2 2661.7,1527.8 2684,1535 C2706.3,1542.2 2731.3,1552.5 2751,1559 C2770.7,1565.5 2785.2,1570.5 2802,1574 C2818.8,1577.5 2836.8,1578.9 2852,1580 C2867.2,1581.1 2886.2,1580.5 2893,1580.6 L2893,1592 C2886.2,1591.7 2867.2,1591.2 2852,1590 C2836.8,1588.8 2818.8,1588.5 2802,1585 C2785.2,1581.5 2770.7,1575.3 2751,1569 C2731.3,1562.7 2706.3,1553.8 2684,1547 C2661.7,1540.2 2636.2,1532.3 2617,1528 C2597.8,1523.7 2585.3,1522.3 2569,1521 C2552.7,1519.7 2533.0,1519.7 2519,1520 C2505.0,1520.3 2499.0,1521.3 2485,1523 C2471.0,1524.7 2451.8,1526.5 2435,1530 C2418.2,1533.5 2400.8,1540.0 2384,1544 C2367.2,1548.0 2350.7,1552.0 2334,1554 C2317.3,1556.0 2304.9,1556.2 2284,1556 C2263.1,1555.8 2221.1,1553.5 2208.5,1553 Z" fill="#2fcf80"/>
<clipPath id="clipTh"><path d="M2208.5,1540.4 C2215.4,1540.8 2231.9,1542.6 2250,1543 C2268.1,1543.4 2297.3,1544.5 2317,1543 C2336.7,1541.5 2351.2,1537.5 2368,1534 C2384.8,1530.5 2401.3,1525.5 2418,1522 C2434.7,1518.5 2451.2,1515.3 2468,1513 C2484.8,1510.7 2502.2,1508.6 2519,1508 C2535.8,1507.4 2552.7,1508.2 2569,1509.5 C2585.3,1510.8 2597.8,1511.8 2617,1516 C2636.2,1520.2 2661.7,1527.8 2684,1535 C2706.3,1542.2 2731.3,1552.5 2751,1559 C2770.7,1565.5 2785.2,1570.5 2802,1574 C2818.8,1577.5 2836.8,1578.9 2852,1580 C2867.2,1581.1 2886.2,1580.5 2893,1580.6 L2893,1592 C2886.2,1591.7 2867.2,1591.2 2852,1590 C2836.8,1588.8 2818.8,1588.5 2802,1585 C2785.2,1581.5 2770.7,1575.3 2751,1569 C2731.3,1562.7 2706.3,1553.8 2684,1547 C2661.7,1540.2 2636.2,1532.3 2617,1528 C2597.8,1523.7 2585.3,1522.3 2569,1521 C2552.7,1519.7 2533.0,1519.7 2519,1520 C2505.0,1520.3 2499.0,1521.3 2485,1523 C2471.0,1524.7 2451.8,1526.5 2435,1530 C2418.2,1533.5 2400.8,1540.0 2384,1544 C2367.2,1548.0 2350.7,1552.0 2334,1554 C2317.3,1556.0 2304.9,1556.2 2284,1556 C2263.1,1555.8 2221.1,1553.5 2208.5,1553 Z"/></clipPath>
<g clip-path="url(#clipTh)">
<path d="M2400,1525 C2411.3,1523.7 2448.2,1519.1 2468,1517 C2487.8,1514.9 2502.2,1513.0 2519,1512.5 C2535.8,1512.0 2552.7,1512.7 2569,1514 C2585.3,1515.3 2597.8,1516.2 2617,1520.5 C2636.2,1524.8 2661.7,1532.3 2684,1539.5 C2706.3,1546.7 2731.3,1557.0 2751,1563.5 C2770.7,1570.0 2787.2,1575.1 2802,1578.5 C2816.8,1581.9 2833.7,1583.1 2840,1584" fill="none" stroke="#2fd9df" stroke-width="5"/>
<path d="M2250,1548 C2261.2,1548.0 2297.3,1549.3 2317,1548 C2336.7,1546.7 2359.5,1541.3 2368,1540" fill="none" stroke="#2fd9df" stroke-width="5"/>
</g>
<path d="M2208.5,1553 C2221.1,1553.5 2263.1,1555.8 2284,1556 C2304.9,1556.2 2317.3,1556.0 2334,1554 C2350.7,1552.0 2367.2,1548.0 2384,1544 C2400.8,1540.0 2418.2,1533.5 2435,1530 C2451.8,1526.5 2471.0,1524.7 2485,1523 C2499.0,1521.3 2505.0,1520.3 2519,1520 C2533.0,1519.7 2552.7,1519.7 2569,1521 C2585.3,1522.3 2597.8,1523.7 2617,1528 C2636.2,1532.3 2661.7,1540.2 2684,1547 C2706.3,1553.8 2731.3,1562.7 2751,1569 C2770.7,1575.3 2785.2,1581.5 2802,1585 C2818.8,1588.5 2836.8,1588.8 2852,1590 C2867.2,1591.2 2886.2,1591.7 2893,1592" fill="none" stroke="#23493a" stroke-width="1.6"/>
<line x1="2208.5" y1="1540.4" x2="2208.5" y2="1553" stroke="#23493a" stroke-width="1.6"/>
<polygon points="2893,1580.6 3167,1450 3167,1463 2893,1592" fill="#2ccb7b" stroke="#23493a" stroke-width="1.4"/>
<clipPath id="clipPlate"><path d="M2479,1410 L3167,1450 L2893,1580.6 L2893,1580.6 C2886.2,1580.5 2867.2,1581.1 2852,1580 C2836.8,1578.9 2818.8,1577.5 2802,1574 C2785.2,1570.5 2770.7,1565.5 2751,1559 C2731.3,1552.5 2706.3,1542.2 2684,1535 C2661.7,1527.8 2636.2,1520.2 2617,1516 C2597.8,1511.8 2585.3,1510.8 2569,1509.5 C2552.7,1508.2 2535.8,1507.4 2519,1508 C2502.2,1508.6 2484.8,1510.7 2468,1513 C2451.2,1515.3 2434.7,1518.5 2418,1522 C2401.3,1525.5 2384.8,1530.5 2368,1534 C2351.2,1537.5 2336.7,1541.5 2317,1543 C2297.3,1544.5 2268.1,1543.4 2250,1543 C2231.9,1542.6 2215.4,1540.8 2208.5,1540.4 Z"/></clipPath>
<path d="M2479,1410 L3167,1450 L2893,1580.6 L2893,1580.6 C2886.2,1580.5 2867.2,1581.1 2852,1580 C2836.8,1578.9 2818.8,1577.5 2802,1574 C2785.2,1570.5 2770.7,1565.5 2751,1559 C2731.3,1552.5 2706.3,1542.2 2684,1535 C2661.7,1527.8 2636.2,1520.2 2617,1516 C2597.8,1511.8 2585.3,1510.8 2569,1509.5 C2552.7,1508.2 2535.8,1507.4 2519,1508 C2502.2,1508.6 2484.8,1510.7 2468,1513 C2451.2,1515.3 2434.7,1518.5 2418,1522 C2401.3,1525.5 2384.8,1530.5 2368,1534 C2351.2,1537.5 2336.7,1541.5 2317,1543 C2297.3,1544.5 2268.1,1543.4 2250,1543 C2231.9,1542.6 2215.4,1540.8 2208.5,1540.4 Z" fill="#36ea8c"/>
<g clip-path="url(#clipPlate)">
<ellipse cx="2345" cy="1521" rx="90" ry="26" transform="rotate(-16 2345 1521)" fill="#30f0ec" filter="url(#blur3)"/>
<ellipse cx="2332" cy="1532" rx="28" ry="9" transform="rotate(-18 2332 1532)" fill="#3a86f0" filter="url(#blur3)"/>
<ellipse cx="2826" cy="1550" rx="118" ry="32" transform="rotate(-2 2826 1550)" fill="#30f4f0" filter="url(#blur3)"/>
<ellipse cx="2810" cy="1560" rx="20" ry="11" fill="#3a86f0" filter="url(#blur3)"/>
<ellipse cx="2516" cy="1493" rx="36" ry="8" fill="#35e82a" filter="url(#blur3)"/>
<ellipse cx="2682" cy="1499" rx="42" ry="8" fill="#35e82a" filter="url(#blur3)"/>
<ellipse cx="2853" cy="1458" rx="15" ry="4" fill="#33e8f0" filter="url(#blur3)"/>
</g>
<path d="M2208.5,1540.4 L2479,1410 L3167,1450 L2893,1580.6" fill="none" stroke="#23493a" stroke-width="1.4"/>
<path d="M2208.5,1540.4 C2215.4,1540.8 2231.9,1542.6 2250,1543 C2268.1,1543.4 2297.3,1544.5 2317,1543 C2336.7,1541.5 2351.2,1537.5 2368,1534 C2384.8,1530.5 2401.3,1525.5 2418,1522 C2434.7,1518.5 2451.2,1515.3 2468,1513 C2484.8,1510.7 2502.2,1508.6 2519,1508 C2535.8,1507.4 2552.7,1508.2 2569,1509.5 C2585.3,1510.8 2597.8,1511.8 2617,1516 C2636.2,1520.2 2661.7,1527.8 2684,1535 C2706.3,1542.2 2731.3,1552.5 2751,1559 C2770.7,1565.5 2785.2,1570.5 2802,1574 C2818.8,1577.5 2836.8,1578.9 2852,1580 C2867.2,1581.1 2886.2,1580.5 2893,1580.6" fill="none" stroke="#23493a" stroke-width="1.6"/>
<path d="M2280,1516 V1529.5 A23,4.5 0 0 0 2326,1529.5 V1516 Z" fill="url(#nutg)"/><path d="M2280,1529.5 A23,4.5 0 0 0 2326,1529.5" fill="none" stroke="#2a5a40" stroke-width="1.8"/><ellipse cx="2303" cy="1516" rx="23" ry="4.5" fill="#35e58c" stroke="#2a5a40" stroke-width="1.4"/><path d="M2280,1516 V1529.5 M2326,1516 V1529.5" stroke="#2a5a40" stroke-width="1.2"/>
<path d="M2828.5,1548 V1561.5 A23,4.5 0 0 0 2874.5,1561.5 V1548 Z" fill="url(#nutg)"/><path d="M2828.5,1561.5 A23,4.5 0 0 0 2874.5,1561.5" fill="none" stroke="#2a5a40" stroke-width="1.8"/><ellipse cx="2851.5" cy="1548" rx="23" ry="4.5" fill="#35e58c" stroke="#2a5a40" stroke-width="1.4"/><path d="M2828.5,1548 V1561.5 M2874.5,1548 V1561.5" stroke="#2a5a40" stroke-width="1.2"/>
<path d="M3047.5,1445 V1458.5 A23,4.5 0 0 0 3093.5,1458.5 V1445 Z" fill="url(#nutg)"/><path d="M3047.5,1458.5 A23,4.5 0 0 0 3093.5,1458.5" fill="none" stroke="#2a5a40" stroke-width="1.8"/><ellipse cx="3070.5" cy="1445" rx="23" ry="4.5" fill="#35e58c" stroke="#2a5a40" stroke-width="1.4"/><path d="M3047.5,1445 V1458.5 M3093.5,1445 V1458.5" stroke="#2a5a40" stroke-width="1.2"/>
<path d="M2494,1414 V1427.5 A23,4.5 0 0 0 2540,1427.5 V1414 Z" fill="url(#nutg)"/><path d="M2494,1427.5 A23,4.5 0 0 0 2540,1427.5" fill="none" stroke="#2a5a40" stroke-width="1.8"/><ellipse cx="2517" cy="1414" rx="23" ry="4.5" fill="#35e58c" stroke="#2a5a40" stroke-width="1.4"/><path d="M2494,1414 V1427.5 M2540,1414 V1427.5" stroke="#2a5a40" stroke-width="1.2"/>
<polygon points="2705,360 2792,360 2767,1456 2678,1474" fill="#25b46d"/>
<polygon points="2792,360 2809,360 2782,1458 2767,1456" fill="#2fd883"/>
<polygon points="2809,360 2866,360 2841,1459 2782,1458" fill="#2ed281"/>
<polygon points="2562,360 2705,360 2678,1474 2674,1493 2533,1485" fill="#2dd180"/>
<path d="M2562,360 L2533,1485 L2674,1493 L2700,360 M2705,360 L2678,1474 L2767,1456 L2792,360 M2794,360 L2767,1456 M2808,360 L2782,1458 L2839,1459 L2863,360 M2866,360 L2841,1459 M2674,1493 L2678,1474" fill="none" stroke="#17402a" stroke-width="1.4"/>
<ellipse cx="2779" cy="1410" rx="5" ry="40" fill="#30e0e8" filter="url(#blur3)" opacity="0.8"/>
<polyline points="1251,1642 2070,1251 2538.312,1278.132" fill="none" stroke="#6d7a72" stroke-width="1.3"/>
<line x1="2844.358" y1="1295.863" x2="4124" y2="1370" stroke="#6d7a72" stroke-width="1.3" stroke-opacity="1"/>
<polyline points="4124,1370 4133,1950 3313,2341 1260,2222 1251,1642" fill="none" stroke="#6d7a72" stroke-width="1.3"/>
<line x1="1251" y1="1642" x2="3305" y2="1762" stroke="#4a6e5a" stroke-width="1.3" stroke-opacity="1"/>
<line x1="3305" y1="1762" x2="4124" y2="1370" stroke="#4a6e5a" stroke-width="1.3" stroke-opacity="1"/>
<line x1="3305" y1="1762" x2="3313" y2="2341" stroke="#4a6e5a" stroke-width="1.3" stroke-opacity="1"/>
<line x1="2871" y1="1204" x2="2550" y2="1470" stroke="#111" stroke-width="1.9"/>
<polygon points="2533,1485 2558,1452 2569,1468" fill="#000"/></g><rect x="885" y="603.0" width="63" height="48.1" fill="#ff3333"/><rect x="885" y="651.1" width="63" height="48.1" fill="#ff9933"/><rect x="885" y="699.2" width="63" height="48.1" fill="#ffff33"/><rect x="885" y="747.3" width="63" height="48.1" fill="#99ff33"/><rect x="885" y="795.4" width="63" height="48.1" fill="#33ff33"/><rect x="885" y="843.6" width="63" height="48.1" fill="#33ff99"/><rect x="885" y="891.7" width="63" height="48.1" fill="#33ffff"/><rect x="885" y="939.8" width="63" height="48.1" fill="#3399ff"/><rect x="885" y="987.9" width="63" height="48.1" fill="#3333ff"/><rect x="884" y="601.5" width="88" height="3" fill="#3c3c3c"/><rect x="884" y="649.6" width="88" height="3" fill="#3c3c3c"/><rect x="884" y="697.7" width="88" height="3" fill="#3c3c3c"/><rect x="884" y="745.8" width="88" height="3" fill="#3c3c3c"/><rect x="884" y="793.9" width="88" height="3" fill="#3c3c3c"/><rect x="884" y="842.1" width="88" height="3" fill="#3c3c3c"/><rect x="884" y="890.2" width="88" height="3" fill="#3c3c3c"/><rect x="884" y="938.3" width="88" height="3" fill="#3c3c3c"/><rect x="884" y="986.4" width="88" height="3" fill="#3c3c3c"/><rect x="884" y="1034.5" width="88" height="3" fill="#3c3c3c"/><rect x="883" y="601.5" width="3" height="436" fill="#3c3c3c"/><rect x="947" y="601.5" width="3" height="436" fill="#3c3c3c"/>
<g stroke="url(#bg)" stroke-width="0.6"><text x="885.0" y="459.7" font-size="33.77" fill="#000" textLength="161.4" lengthAdjust="spacingAndGlyphs" >STRESS: S11</text><text x="885.4" y="507.4" font-size="33.77" fill="#000" textLength="138.6" lengthAdjust="spacingAndGlyphs" >Unit: MPa</text><text x="884.0" y="555.4" font-size="33.77" fill="#000" textLength="161.7" lengthAdjust="spacingAndGlyphs" >Automatic</text><text x="996.0" y="611.5" font-size="33.77" fill="#000" textLength="90.0" lengthAdjust="spacingAndGlyphs" >+1158</text><text x="996.0" y="659.6" font-size="33.77" fill="#000" textLength="69.0" lengthAdjust="spacingAndGlyphs" >+960</text><text x="996.0" y="707.7" font-size="33.77" fill="#000" textLength="98.0" lengthAdjust="spacingAndGlyphs" >+761.9</text><text x="996.0" y="755.8" font-size="33.77" fill="#000" textLength="98.0" lengthAdjust="spacingAndGlyphs" >+563.7</text><text x="996.0" y="803.9" font-size="33.77" fill="#000" textLength="98.0" lengthAdjust="spacingAndGlyphs" >+365.6</text><text x="996.0" y="852.1" font-size="33.77" fill="#000" textLength="98.0" lengthAdjust="spacingAndGlyphs" >+167.4</text><text x="996.0" y="900.2" font-size="33.77" fill="#000" textLength="96.0" lengthAdjust="spacingAndGlyphs" >- 30.73</text><text x="996.0" y="948.3" font-size="33.77" fill="#000" textLength="96.0" lengthAdjust="spacingAndGlyphs" >- 228.9</text><text x="996.0" y="996.4" font-size="33.77" fill="#000" textLength="68.0" lengthAdjust="spacingAndGlyphs" >- 427</text><text x="996.0" y="1044.5" font-size="33.77" fill="#000" textLength="96.0" lengthAdjust="spacingAndGlyphs" >- 625.2</text></g><g stroke="url(#bg)" stroke-width="0.6"><rect x="3415.5" y="402" width="1042.5" height="146.5" fill="none" stroke="#3d3d3d" stroke-width="3"/><text x="3427.0" y="439.5" font-size="33.77" fill="#000" textLength="475.0" lengthAdjust="spacingAndGlyphs" >Name: Col-Base_(From_IFC).frd</text><text x="3928.0" y="439.5" font-size="33.77" fill="#000" textLength="262.0" lengthAdjust="spacingAndGlyphs" >Date: 09/19/2023</text><text x="4216.0" y="439.5" font-size="33.77" fill="#000" textLength="206.0" lengthAdjust="spacingAndGlyphs" >Time: 15:22:11</text><text x="3427.0" y="487.0" font-size="33.77" fill="#000" textLength="115.0" lengthAdjust="spacingAndGlyphs" >Step: #1</text><text x="3571.0" y="487.0" font-size="33.77" fill="#000" textLength="207.0" lengthAdjust="spacingAndGlyphs" >Increment: #2</text><text x="3805.0" y="487.0" font-size="33.77" fill="#000" textLength="247.0" lengthAdjust="spacingAndGlyphs" >Analysis time: 1 s</text><text x="3427.0" y="535.0" font-size="33.77" fill="#000" textLength="565.0" lengthAdjust="spacingAndGlyphs" >Deformation variable: Displacements</text><text x="4017.0" y="535.0" font-size="33.77" fill="#000" textLength="428.0" lengthAdjust="spacingAndGlyphs" >Deformation scale factor: 17</text></g><g stroke="url(#bg)" stroke-width="0.6"><text x="2880.0" y="1192.0" font-size="33.77" fill="#000" textLength="233.0" lengthAdjust="spacingAndGlyphs" >Max: 1158 MPa</text><text x="2880.0" y="1240.0" font-size="33.77" fill="#000" textLength="227.0" lengthAdjust="spacingAndGlyphs" >Node id: 31049</text></g><rect x="2633" y="2569" width="798" height="21" fill="#f2f2f2" stroke="#7a7a7a" stroke-width="2.4"/><rect x="2632" y="2568" width="162" height="23" fill="#000"/><rect x="2951" y="2568" width="162" height="23" fill="#000"/><rect x="3270" y="2568" width="162" height="23" fill="#000"/><g stroke="url(#bg)" stroke-width="0.6"><text x="2628.0" y="2625.5" font-size="32.90" fill="#000" textLength="14.0" lengthAdjust="spacingAndGlyphs" >0</text><text x="2769.0" y="2625.5" font-size="32.90" fill="#000" textLength="49.0" lengthAdjust="spacingAndGlyphs" >108</text><text x="2924.0" y="2625.5" font-size="32.90" fill="#000" textLength="54.0" lengthAdjust="spacingAndGlyphs" >216</text><text x="3083.0" y="2625.5" font-size="32.90" fill="#000" textLength="54.0" lengthAdjust="spacingAndGlyphs" >324</text><text x="3243.0" y="2625.5" font-size="32.90" fill="#000" textLength="53.0" lengthAdjust="spacingAndGlyphs" >432</text><text x="3403.0" y="2625.5" font-size="32.90" fill="#000" textLength="122.0" lengthAdjust="spacingAndGlyphs" >540 mm</text></g><line x1="4297.3" y1="2440" x2="4297.3" y2="2348" stroke="#3a4fcf" stroke-width="2"/><polygon points="4296.5,2329.5 4288,2350 4306,2350" fill="#2b3aaf"/><line x1="4298" y1="2440" x2="4384" y2="2444" stroke="#c01838" stroke-width="2.2"/><polygon points="4406,2447 4382.5,2436 4382.5,2453.5" fill="#a8102a"/><line x1="4298" y1="2440" x2="4326" y2="2427" stroke="#30c030" stroke-width="1.8" stroke-dasharray="3,1.5"/><circle cx="4328" cy="2426" r="8" fill="#22b522"/><g stroke="url(#bg)" stroke-width="0.5"><text x="4300.0" y="2345.8" font-size="31.88" fill="#111" textLength="14.0" lengthAdjust="spacingAndGlyphs" >Z</text><text x="4388.6" y="2437.4" font-size="31.01" fill="#111" textLength="17.0" lengthAdjust="spacingAndGlyphs" >X</text><text x="4331.7" y="2417.5" font-size="25.36" fill="#111" textLength="14.0" lengthAdjust="spacingAndGlyphs" >Y</text></g>
</svg><div class="a" style="left:805px;top:404px;width:7px;height:2446px;background:#ffffff;"></div>
<div class="a" style="left:813px;top:2650px;width:3686px;height:200px;background:#fff;border-top:2px solid #e6e6e6;border-left:2px solid #e6e6e6;border-bottom:2px solid #6d6d6d;"></div>
<div class="a" style="left:4465px;top:2653px;width:32px;height:194px;background:#f0f0f0;"></div>
<svg style="left:4465px;top:2650px" width="32" height="200" viewBox="4465 2650 32 200"><polygon points="4481,2666 4473,2678 4489,2678" fill="#a3a3a3"/><polygon points="4481,2834 4473,2822 4489,2822" fill="#a3a3a3"/></svg>
<div class="a" style="left:0;top:2850px;width:4500px;height:8px;background:#ececec;"></div>
<div class="a" style="left:0;top:2857px;width:4500px;height:45px;background:#fcfcfc;"></div>
<div class="a" style="left:12px;top:2859px;width:78px;height:38px;background:#ffffff;"></div>
<div class="a" style="left:4166px;top:2859px;width:304px;height:38px;background:#ffffff;"></div>
<div class="a" style="left:0;top:2900px;width:4500px;height:2px;background:#e8e8e8;"></div>
<div class="a" style="left:0;top:2903px;width:4500px;height:3px;background:#3d3d3d;"></div>
<div class="t" style="left:19.0px;top:2863.7px;font-size:25.07px;color:#000;font-weight:normal;transform:scaleX(0.8417);">Ready</div>
<div class="t" style="left:4174.0px;top:2863.7px;font-size:25.07px;color:#000;font-weight:normal;transform:scaleX(0.9474);">Unit system: mm, ton, s, °C</div></body></html>
